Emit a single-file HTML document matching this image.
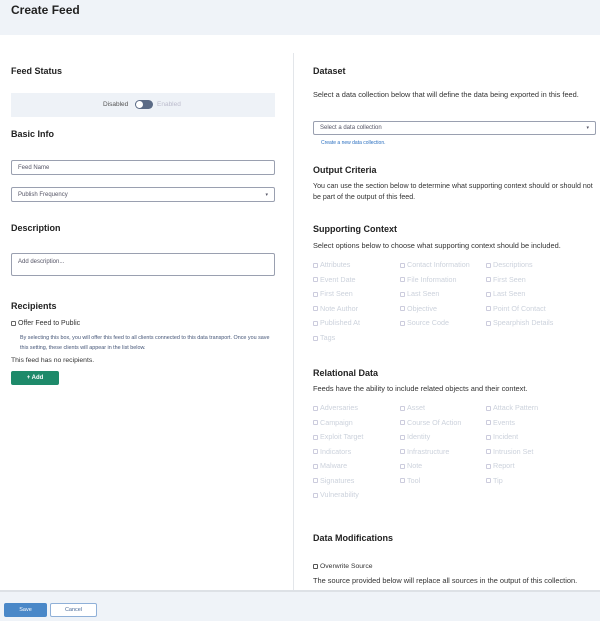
<!DOCTYPE html>
<html><head><meta charset="utf-8"><style>
*{box-sizing:border-box;margin:0;padding:0}
body{width:600px;height:621px;overflow:hidden;background:#fff;font-family:"Liberation Sans",sans-serif;color:#222;position:relative}
.a{position:absolute;white-space:nowrap}
h1{font-size:12px;font-weight:bold}
.h{font-size:9px;font-weight:bold;color:#222}
.t{font-size:7.4px;color:#333}
.inp{position:absolute;border:1px solid #9aa0b0;border-radius:2px;background:#fff;font-size:6px;color:#556;padding-left:6px;display:flex;align-items:center}
.cb{display:inline-block;width:5px;height:5px;border:1px solid #ccd;border-radius:1px;margin-right:2px;vertical-align:middle}
.g{font-size:7.2px;color:#ccd2dc}
</style></head><body>
<div class="a" style="left:0;top:0;width:600px;height:35px;background:#eff3f8"></div>
<div class="a" style="left:11px;top:3px"><h1>Create Feed</h1></div>
<div class="a" style="left:293px;top:53px;width:1px;height:537px;background:#e3e6ea"></div>

<div class="a h" style="left:11px;top:66px">Feed Status</div>
<div class="a" style="left:11px;top:93px;width:264px;height:24px;background:#eef2f7"></div>
<div class="a t" style="left:103px;top:101px;color:#555;font-size:6.5px">Disabled</div>
<div class="a" style="left:135px;top:100px;width:18px;height:9px;border-radius:5px;background:#5b6b86"></div>
<div class="a" style="left:136px;top:101px;width:7px;height:7px;border-radius:50%;background:#fff"></div>
<div class="a t" style="left:157px;top:101px;color:#bbc;font-size:6.5px">Enabled</div>
<div class="a h" style="left:11px;top:129px">Basic Info</div>
<div class="inp" style="left:11px;top:160px;width:264px;height:15px">Feed Name</div>
<div class="inp" style="left:11px;top:187px;width:264px;height:15px">Publish Frequency<span style="position:absolute;right:6px;font-size:5px">▾</span></div>
<div class="a h" style="left:11px;top:223px">Description</div>
<div class="inp" style="left:11px;top:253px;width:264px;height:23px;align-items:flex-start;padding-top:5px">Add description...</div>
<div class="a h" style="left:11px;top:301px">Recipients</div>
<div class="a t" style="left:11px;top:320px;font-size:7px"><span class="cb" style="border-color:#666"></span>Offer Feed to Public</div>
<div class="a" style="left:20px;top:333px;font-size:5.4px;color:#445577;line-height:10px">By selecting this box, you will offer this feed to all clients connected to this data transport. Once you save<br>this setting, these clients will appear in the list below.</div>
<div class="a t" style="left:11px;top:357px;font-size:6.8px">This feed has no recipients.</div>
<div class="a" style="left:11px;top:371px;width:48px;height:14px;background:#1e8a6a;border-radius:2px;color:#fff;font-size:6px;font-weight:bold;text-align:center;line-height:14px">+ Add</div>

<div class="a h" style="left:313px;top:66px">Dataset</div>
<div class="a t" style="left:313px;top:90px">Select a data collection below that will define the data being exported in this feed.</div>
<div class="inp" style="left:313px;top:121px;width:283px;height:14px">Select a data collection<span style="position:absolute;right:6px;font-size:5px">▾</span></div>
<div class="a" style="left:321px;top:140px;font-size:5px;color:#2a6fc0">Create a new data collection.</div>
<div class="a h" style="left:313px;top:165px">Output Criteria</div>
<div class="a t" style="left:313px;top:181px;line-height:11px;font-size:7.1px">You can use the section below to determine what supporting context should or should not<br>be part of the output of this feed.</div>
<div class="a h" style="left:313px;top:224px">Supporting Context</div>
<div class="a t" style="left:313px;top:241px">Select options below to choose what supporting context should be included.</div>
<div class="a g" style="left:313px;top:258px;line-height:14.6px"><div><span class="cb"></span>Attributes</div><div><span class="cb"></span>Event Date</div><div><span class="cb"></span>First Seen</div><div><span class="cb"></span>Note Author</div><div><span class="cb"></span>Published At</div><div><span class="cb"></span>Tags</div></div>
<div class="a g" style="left:400px;top:258px;line-height:14.6px"><div><span class="cb"></span>Contact Information</div><div><span class="cb"></span>File Information</div><div><span class="cb"></span>Last Seen</div><div><span class="cb"></span>Objective</div><div><span class="cb"></span>Source Code</div></div>
<div class="a g" style="left:486px;top:258px;line-height:14.6px"><div><span class="cb"></span>Descriptions</div><div><span class="cb"></span>First Seen</div><div><span class="cb"></span>Last Seen</div><div><span class="cb"></span>Point Of Contact</div><div><span class="cb"></span>Spearphish Details</div></div>
<div class="a h" style="left:313px;top:368px">Relational Data</div>
<div class="a t" style="left:313px;top:384px">Feeds have the ability to include related objects and their context.</div>
<div class="a g" style="left:313px;top:401px;line-height:14.5px"><div><span class="cb"></span>Adversaries</div><div><span class="cb"></span>Campaign</div><div><span class="cb"></span>Exploit Target</div><div><span class="cb"></span>Indicators</div><div><span class="cb"></span>Malware</div><div><span class="cb"></span>Signatures</div><div><span class="cb"></span>Vulnerability</div></div>
<div class="a g" style="left:400px;top:401px;line-height:14.5px"><div><span class="cb"></span>Asset</div><div><span class="cb"></span>Course Of Action</div><div><span class="cb"></span>Identity</div><div><span class="cb"></span>Infrastructure</div><div><span class="cb"></span>Note</div><div><span class="cb"></span>Tool</div></div>
<div class="a g" style="left:486px;top:401px;line-height:14.5px"><div><span class="cb"></span>Attack Pattern</div><div><span class="cb"></span>Events</div><div><span class="cb"></span>Incident</div><div><span class="cb"></span>Intrusion Set</div><div><span class="cb"></span>Report</div><div><span class="cb"></span>Tip</div></div>
<div class="a h" style="left:313px;top:533px">Data Modifications</div>
<div class="a t" style="left:313px;top:563px;font-size:6.8px"><span class="cb" style="border-color:#555"></span>Overwrite Source</div>
<div class="a t" style="left:313px;top:576px">The source provided below will replace all sources in the output of this collection.</div>

<div class="a" style="left:0;top:590px;width:600px;height:31px;background:#eff3f8;border-top:2px solid #dde1e6"></div>
<div class="a" style="left:4px;top:603px;width:43px;height:14px;background:#4a88c8;border-radius:2px;color:#fff;font-size:5.5px;text-align:center;line-height:14px">Save</div>
<div class="a" style="left:50px;top:603px;width:47px;height:14px;background:#fff;border:1px solid #8fb0d8;border-radius:2px;color:#4a6a98;font-size:5.5px;text-align:center;line-height:12px">Cancel</div>
</body></html>
